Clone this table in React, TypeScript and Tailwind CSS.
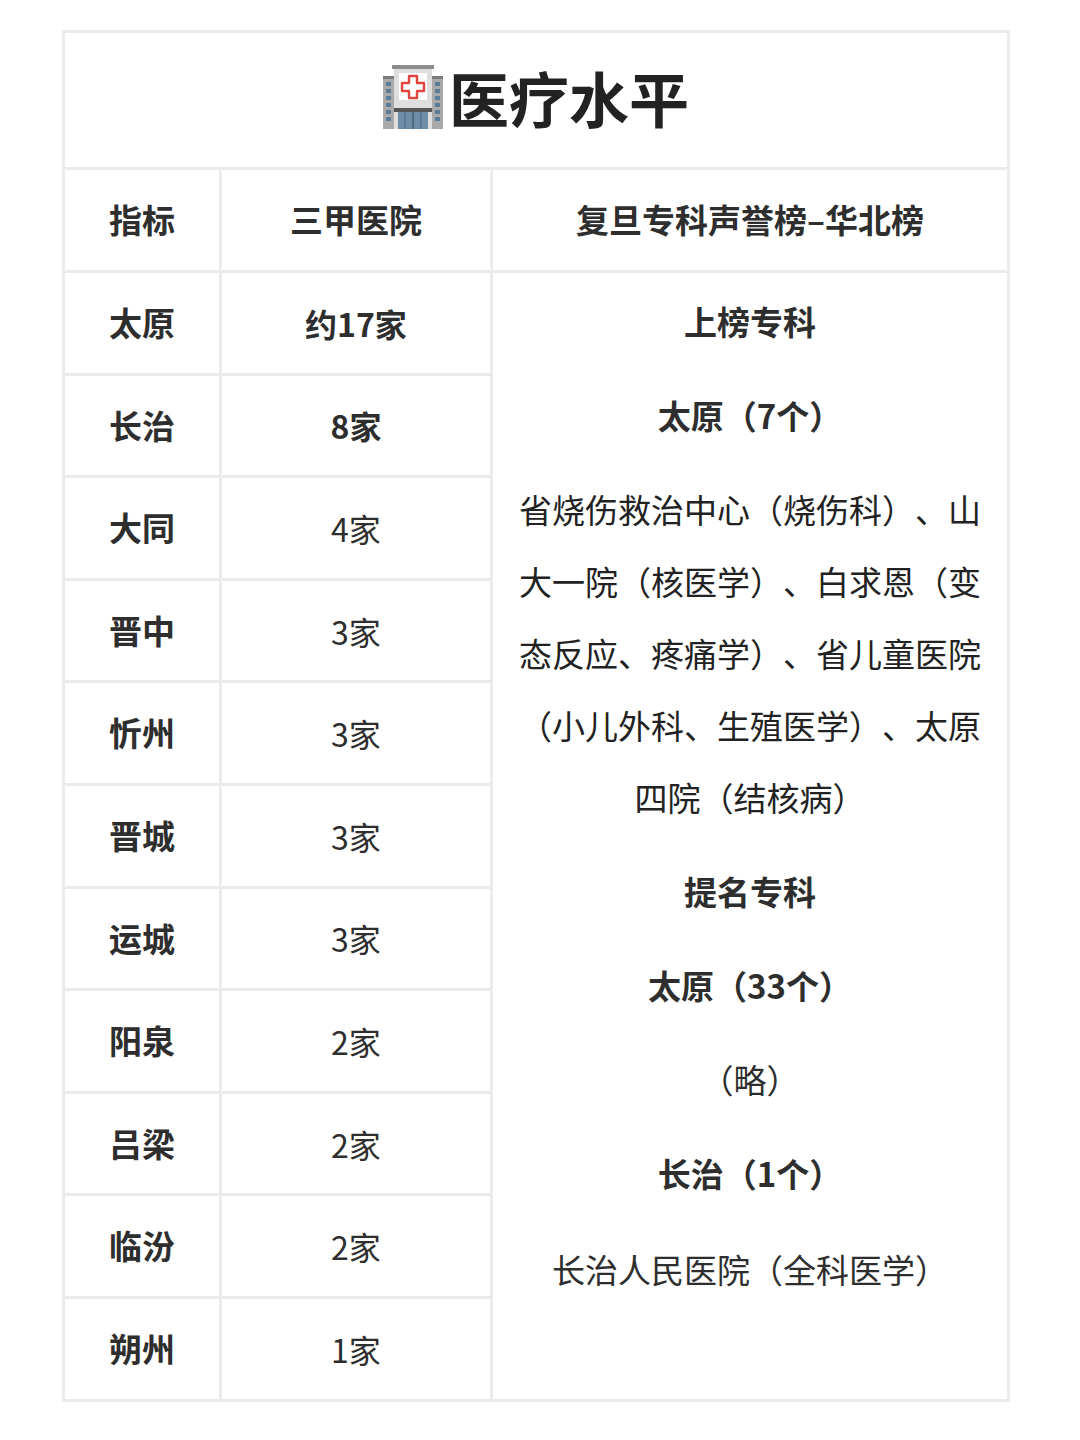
import React from "react";

const FONT = { fontFamily: '"Noto Sans CJK SC", "Noto Sans", sans-serif' };

interface CityRow {
  city: string;
  count: string;
  bold?: boolean;
}

const rows: CityRow[] = [
  { city: "太原", count: "约17家", bold: true },
  { city: "长治", count: "8家", bold: true },
  { city: "大同", count: "4家" },
  { city: "晋中", count: "3家" },
  { city: "忻州", count: "3家" },
  { city: "晋城", count: "3家" },
  { city: "运城", count: "3家" },
  { city: "阳泉", count: "2家" },
  { city: "吕梁", count: "2家" },
  { city: "临汾", count: "2家" },
  { city: "朔州", count: "1家" },
];

function HospitalIcon() {
  return (
    <svg width="60" height="64" viewBox="0 0 60 64" className="shrink-0">
      <rect x="0" y="12" width="60" height="52" fill="#a9a9a9" />
      <rect x="0" y="11" width="60" height="3" fill="#7c7c7c" />
      {[17, 24, 31, 38, 45, 52].map((y) => (
        <g key={y}>
          <rect x="3" y={y} width="5" height="4" fill="#5b7d98" />
          <rect x="52" y={y} width="5" height="4" fill="#5b7d98" />
        </g>
      ))}
      <rect x="11" y="3" width="38" height="61" fill="#dedede" />
      <rect x="9" y="0" width="42" height="4" fill="#8c8c8c" />
      <rect x="16" y="8" width="28" height="27" fill="#ffffff" />
      <path
        d="M26 11h8v7h7v8h-7v7h-8v-7h-7v-8h7z"
        fill="#ffffff"
        stroke="#e0463f"
        strokeWidth="2.4"
        strokeLinejoin="round"
      />
      <rect x="11" y="43" width="38" height="4" fill="#555" />
      <rect x="15" y="47" width="30" height="17" fill="#6e8ea8" />
      <rect x="29" y="47" width="2" height="17" fill="#4e6b82" />
      <rect x="21.5" y="47" width="1.2" height="17" fill="#4e6b82" />
      <rect x="37.3" y="47" width="1.2" height="17" fill="#4e6b82" />
    </svg>
  );
}

const cell = "border-[3px] border-[#ebebeb] text-center align-middle";

export default function App() {
  return (
    <div className="min-h-[1440px] bg-white pt-[30px] [text-spacing-trim:space-all]" style={FONT}>
      <table className="ml-[62px] w-[945px] table-fixed border-collapse text-[#2e2e2e]">
        <colgroup>
          <col className="w-[157px]" />
          <col className="w-[271px]" />
          <col className="w-[517px]" />
        </colgroup>
        <tbody>
          <tr>
            <td colSpan={3} className={`${cell} h-[137px]`}>
              <div className="mb-[6px] flex items-center justify-center gap-[6px]">
                <HospitalIcon />
                <span className="text-[60px] font-bold leading-none text-[#222]">医疗水平</span>
              </div>
            </td>
          </tr>
          <tr className="text-[33px] font-bold">
            <td className={`${cell} h-[103px]`}>指标</td>
            <td className={cell}>三甲医院</td>
            <td className={cell}>复旦专科声誉榜–华北榜</td>
          </tr>
          {rows.map((r, i) => (
            <tr key={r.city}>
              <td className={`${cell} h-[102.6px] text-[33px] font-bold`}>{r.city}</td>
              <td className={`${cell} text-[32px] ${r.bold ? "font-bold" : "font-normal"}`}>{r.count}</td>
              {i === 0 && (
                <td rowSpan={11} className="border-[3px] border-[#ebebeb] px-[24px] pt-[12px] text-center align-top text-[33px]">
                  <div className="flex flex-col gap-[22px] leading-[72px]">
                    <p className="font-bold">上榜专科</p>
                    <p className="font-bold">太原（7个）</p>
                    <p className="text-[#222]">
                      省烧伤救治中心（烧伤科）、山大一院（核医学）、白求恩（变态反应、疼痛学）、省儿童医院（小儿外科、生殖医学）、太原四院（结核病）
                    </p>
                    <p className="font-bold">提名专科</p>
                    <p className="font-bold">太原（33个）</p>
                    <p>（略）</p>
                    <p className="font-bold">长治（1个）</p>
                    <p className="mt-[2px]">长治人民医院（全科医学）</p>
                  </div>
                </td>
              )}
            </tr>
          ))}
        </tbody>
      </table>
    </div>
  );
}
